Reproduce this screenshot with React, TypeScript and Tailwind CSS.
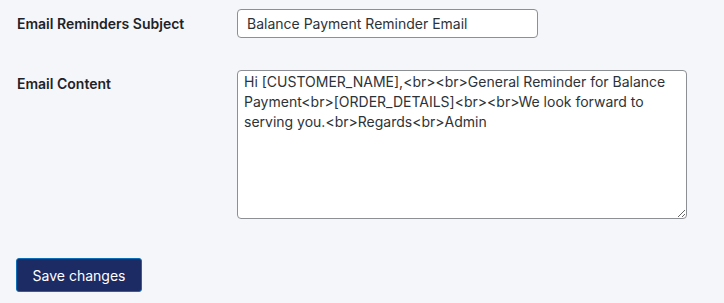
import React from "react";

export default function App() {
  return (
    <div
      className="min-h-screen w-full bg-[#f5f6fa] pl-4 pt-[9px] text-[14px] text-[#1d2327]"
      style={{ fontFamily: "Inter, 'Noto Sans', sans-serif" }}
    >
      <div className="flex items-center">
        <label className="w-[221px] pl-px font-semibold leading-5">Email Reminders Subject</label>
        <input
          type="text"
          defaultValue="Balance Payment Reminder Email"
          className="h-[29px] w-[301px] rounded-[4px] border border-[#8c8f94] bg-white px-[9px] text-[14px] text-[#2c3338] outline-none"
        />
      </div>
      <div className="mt-[32px] flex items-start">
        <label className="w-[221px] pl-px pt-[4px] font-semibold leading-5">Email Content</label>
        <textarea
          defaultValue="Hi [CUSTOMER_NAME],<br><br>General Reminder for Balance Payment<br>[ORDER_DETAILS]<br><br>We look forward to serving you.<br>Regards<br>Admin"
          className="h-[149px] w-[450px] rounded-[4px] border border-[#8c8f94] bg-white px-[6px] py-[1px] text-[14px] leading-5 text-[#2c3338] outline-none"
        />
      </div>
      <div className="mt-[39px]">
        <button className="block h-[34px] w-[126px] rounded-[3px] border border-[#0a6fb8] bg-[#1d2b64] text-[14px] text-white">
          Save changes
        </button>
      </div>
    </div>
  );
}
